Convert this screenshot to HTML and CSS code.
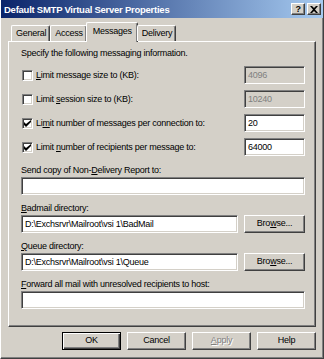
FILE: index.html
```html
<!DOCTYPE html>
<html lang="en">
<head>
    <meta charset="UTF-8">
    <title>Default SMTP Virtual Server Properties</title>
    <link rel="stylesheet" href="styles.css">
</head>
<body>
    <div class="window">
        <div class="titlebar">
            <div class="title">Default SMTP Virtual Server Properties</div>
            <div class="caption-buttons">
                <div class="cap-btn help">?</div>
                <div class="cap-btn">
                    <svg width="8" height="7" viewBox="0 0 8 7"><path d="M0 0h2l2 2 2-2h2L5 3.5 8 7H6L4 5 2 7H0l3-3.5z" fill="#000"/></svg>
                </div>
            </div>
        </div>

        <div class="tabs">
            <div class="tab">General</div>
            <div class="tab">Access</div>
            <div class="tab active">Messages</div>
            <div class="tab">Delivery</div>
        </div>

        <div class="panel">
            <div class="intro">Specify the following messaging information.</div>

            <div class="limit-row first">
                <div class="check">
                    <span class="box"></span>
                    <span><u>L</u>imit message size to (KB):</span>
                </div>
                <div class="field small disabled">4096</div>
            </div>
            <div class="limit-row">
                <div class="check">
                    <span class="box"></span>
                    <span>Limit <u>s</u>ession size to (KB):</span>
                </div>
                <div class="field small disabled">10240</div>
            </div>
            <div class="limit-row">
                <div class="check">
                    <span class="box checked">
                        <svg width="7" height="7" viewBox="0 0 7 7"><path d="M0 2v3l2 2 5-5V0L2 4z" fill="#000"/></svg>
                    </span>
                    <span>Li<u>m</u>it number of messages per connection to:</span>
                </div>
                <div class="field small">20</div>
            </div>
            <div class="limit-row">
                <div class="check">
                    <span class="box checked">
                        <svg width="7" height="7" viewBox="0 0 7 7"><path d="M0 2v3l2 2 5-5V0L2 4z" fill="#000"/></svg>
                    </span>
                    <span>Limit <u>n</u>umber of recipients per message to:</span>
                </div>
                <div class="field small">64000</div>
            </div>

            <div class="group first">
                <div class="label">Send copy of Non-<u>D</u>elivery Report to:</div>
                <div class="field"></div>
            </div>
            <div class="group">
                <div class="label"><u>B</u>admail directory:</div>
                <div class="field-row">
                    <div class="field path">D:\Exchsrvr\Mailroot\vsi 1\BadMail</div>
                    <div class="button browse">Bro<u>w</u>se...</div>
                </div>
            </div>
            <div class="group">
                <div class="label"><u>Q</u>ueue directory:</div>
                <div class="field-row">
                    <div class="field path">D:\Exchsrvr\Mailroot\vsi 1\Queue</div>
                    <div class="button browse">Bro<u>w</u>se...</div>
                </div>
            </div>
            <div class="group">
                <div class="label"><u>F</u>orward all mail with unresolved recipients to host:</div>
                <div class="field"></div>
            </div>
        </div>

        <div class="actions">
            <div class="button default">OK</div>
            <div class="button">Cancel</div>
            <div class="button disabled"><u>A</u>pply</div>
            <div class="button">Help</div>
        </div>
    </div>
</body>
</html>
```

FILE: styles.css
```css
body {
    margin: 0;
    font-family: "Liberation Sans", Arial, sans-serif;
    font-size: 9px;
    letter-spacing: -0.25px;
    color: #000;
    background: #d4d0c8;
}
.window {
    width: 324px;
    height: 359px;
    box-sizing: border-box;
    background: #d4d0c8;
    border-left: 1px solid #fff;
    border-right: 1px solid #404040;
    border-bottom: 1px solid #404040;
    box-shadow: inset -1px -1px #808080;
    display: flex;
    flex-direction: column;
}
.titlebar {
    height: 18px;
    display: flex;
    align-items: center;
    justify-content: space-between;
    padding: 0 2px 0 3px;
    background: linear-gradient(to right, #0a246a, #a6caf0);
}
.title {
    color: #fff;
    font-weight: bold;
    font-size: 9.5px;
}
.caption-buttons {
    display: flex;
    gap: 2px;
}
.cap-btn {
    width: 14px;
    height: 12px;
    box-sizing: border-box;
    background: #d4d0c8;
    border-top: 1px solid #fff;
    border-left: 1px solid #fff;
    border-right: 1px solid #404040;
    border-bottom: 1px solid #404040;
    box-shadow: inset -1px -1px #808080;
    display: flex;
    align-items: center;
    justify-content: center;
    font-weight: bold;
    font-size: 9px;
    line-height: 10px;
}
.tabs {
    display: flex;
    align-items: flex-end;
    height: 19px;
    margin-top: 4px;
    padding-left: 10px;
    position: relative;
    z-index: 1;
}
.tab {
    height: 16px;
    line-height: 15px;
    padding: 0 3px 0 4px;
    box-sizing: border-box;
    background: #d4d0c8;
    border-top: 1px solid #fff;
    border-left: 1px solid #fff;
    border-right: 1px solid #404040;
    border-radius: 2px 2px 0 0;
    box-shadow: inset -1px 0 #808080;
}
.tab.active {
    height: 20px;
    margin-bottom: -1px;
    padding: 0 5px 0 6px;
    line-height: 16px;
    margin-left: -1px;
    margin-right: -1px;
}
.panel {
    margin: 0 7px 0 7px;
    height: 286px;
    box-sizing: border-box;
    border-top: 1px solid #fff;
    border-left: 1px solid #fff;
    border-right: 1px solid #404040;
    border-bottom: 1px solid #404040;
    box-shadow: inset -1px -1px #808080;
    padding: 5px 10px 0 12px;
}
.intro {
    line-height: 12px;
}
.limit-row {
    display: flex;
    align-items: center;
    justify-content: space-between;
    margin-top: 6px;
}
.limit-row.first {
    margin-top: 7px;
}
.check {
    display: flex;
    align-items: center;
    gap: 3px;
    padding-left: 1px;
}
.box {
    width: 11px;
    height: 11px;
    box-sizing: border-box;
    background: #fff;
    border-top: 1px solid #808080;
    border-left: 1px solid #808080;
    border-right: 1px solid #fff;
    border-bottom: 1px solid #fff;
    box-shadow: inset 1px 1px #404040, inset -1px -1px #d4d0c8;
    display: flex;
    align-items: center;
    justify-content: center;
}
.field {
    height: 18px;
    box-sizing: border-box;
    background: #fff;
    border-top: 1px solid #808080;
    border-left: 1px solid #808080;
    border-right: 1px solid #fff;
    border-bottom: 1px solid #fff;
    box-shadow: inset 1px 1px #404040, inset -1px -1px #d4d0c8;
    padding: 2px 3px 0;
    line-height: 12px;
    white-space: nowrap;
}
.field.small {
    width: 61px;
}
.field.disabled {
    background: #d4d0c8;
    color: #808080;
}
.group {
    margin-top: 7px;
}
.group.first {
    margin-top: 8px;
}
.label {
    line-height: 12px;
    margin-bottom: 1px;
}
.field-row {
    display: flex;
    justify-content: space-between;
}
.field.path {
    width: 217px;
}
.button {
    width: 59px;
    height: 18px;
    box-sizing: border-box;
    background: #d4d0c8;
    border-top: 1px solid #fff;
    border-left: 1px solid #fff;
    border-right: 1px solid #404040;
    border-bottom: 1px solid #404040;
    box-shadow: inset -1px -1px #808080;
    text-align: center;
    line-height: 15px;
}
.button.browse {
    width: 61px;
}
.button.default {
    border: 1px solid #000;
    box-shadow: inset 1px 1px #fff, inset -1px -1px #404040, inset -2px -2px #808080;
}
.button.disabled {
    color: #808080;
    text-shadow: 1px 1px #fff;
}
.actions {
    display: flex;
    justify-content: flex-end;
    gap: 6px;
    margin-top: 5px;
    padding-right: 7px;
}
```
